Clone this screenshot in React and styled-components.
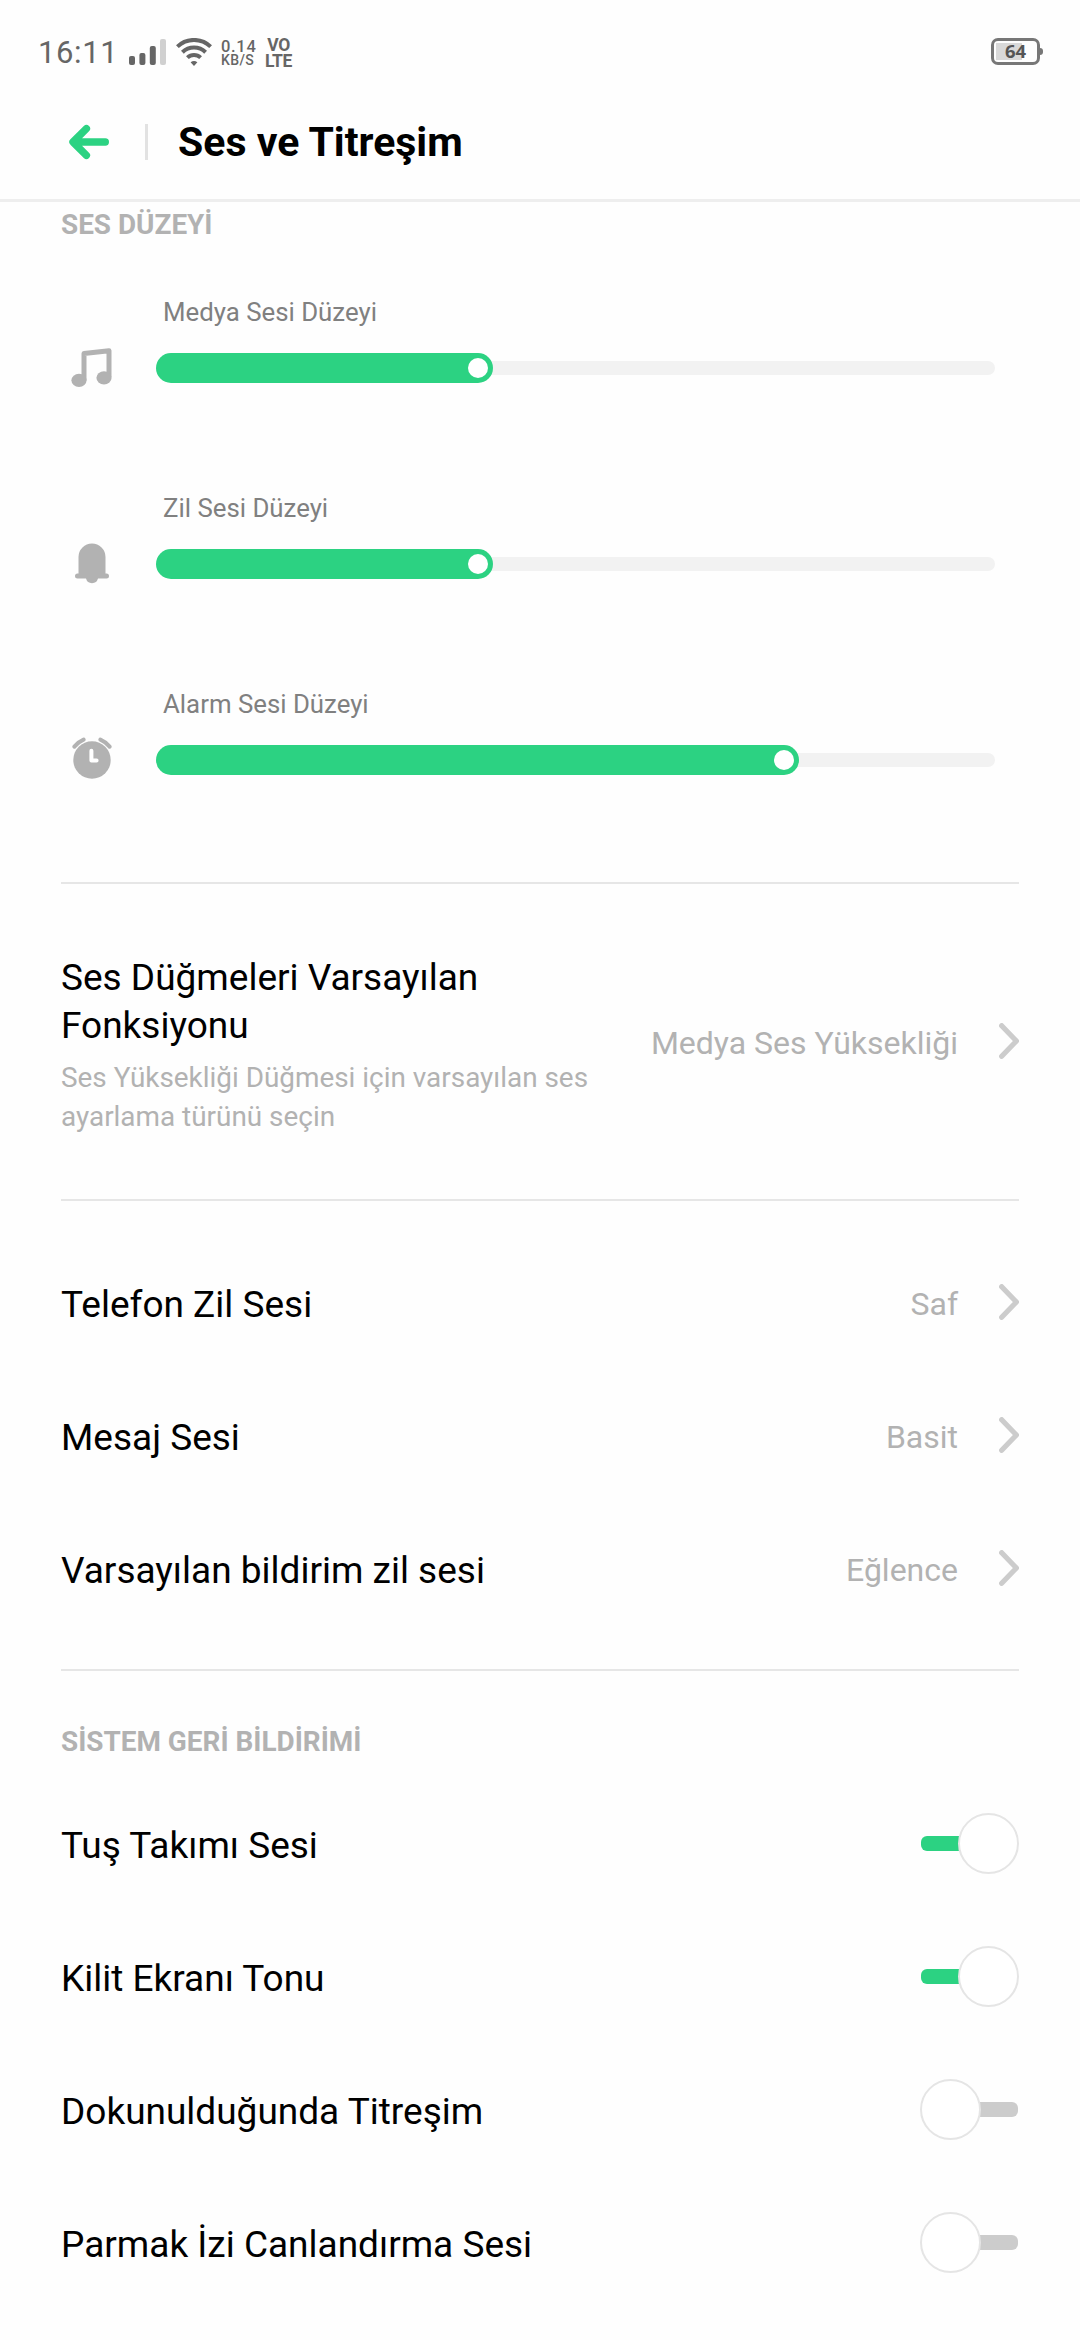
import styled, { createGlobalStyle, css } from "styled-components";

const GlobalStyle = createGlobalStyle`
  * {
    box-sizing: border-box;
  }

  body {
    margin: 0;
    background-color: #fefefe;
    font-family: Roboto, "Noto Sans", sans-serif;
    color: #000;
  }
`;

const Screen = styled.div`
  width: 1080px;
  height: 2340px;
  overflow: hidden;
  background-color: #fefefe;
`;

const StatusBar = styled.div`
  display: flex;
  justify-content: space-between;
  height: 84px;
  padding: 36px 37px 0 38px;
  color: #666;
`;

const StatusGroup = styled.div`
  display: flex;
  align-items: flex-start;
  height: 34px;
`;

const Clock = styled.div`
  width: 91px;
  font-size: 31px;
  line-height: 34px;
  letter-spacing: 0.6px;
`;

const SignalIcon = styled.svg`
  margin: 3px 10px 0 0;
`;

const WifiIcon = styled.svg`
  margin: 2px 9px 0 0;
`;

const NetSpeed = styled.div`
  width: 43px;
  font-weight: 500;
`;

const SpeedValue = styled.div`
  font-size: 16.5px;
  line-height: 17px;
  letter-spacing: 0.7px;
  margin-top: 2px;
`;

const SpeedUnit = styled.div`
  font-size: 14px;
  line-height: 11px;
  letter-spacing: 0.4px;
`;

const Volte = styled.div`
  width: 29px;
  padding-top: 1px;
  font-size: 17.5px;
  font-weight: 700;
  line-height: 16px;
  letter-spacing: -0.4px;
  text-align: center;
`;

const Battery = styled.div`
  display: flex;
  align-items: center;
  margin: 2px 0 0;
  height: 27px;
`;

const BatteryShell = styled.div`
  display: flex;
  align-items: center;
  justify-content: center;
  width: 49px;
  height: 27px;
  padding-bottom: 1px;
  border: 3px solid #777;
  border-radius: 7px;
  background: linear-gradient(#d9d9d9, #d9d9d9) 2px 2px / 26px 17px no-repeat;
  font-family: "Open Sans", "Noto Sans", sans-serif;
  font-size: 18.5px;
  font-weight: 700;
  line-height: 20px;
  color: #555;
`;

const BatteryTip = styled.div`
  width: 3px;
  height: 7px;
  border-radius: 0 3px 3px 0;
  background-color: #777;
`;

const Header = styled.div`
  display: flex;
  align-items: center;
  height: 118px;
  padding-left: 69px;
  border-bottom: 3px solid #eee;
`;

const HeaderRule = styled.div`
  width: 3px;
  height: 36px;
  margin: 0 30px 0 36px;
  background-color: #e2e2e2;
`;

const Title = styled.h1`
  margin: 0;
  font-size: 41px;
  font-weight: 700;
  line-height: 48px;
`;

const Content = styled.div`
  padding: 0 61px;
`;

const SectionTitle = styled.h2`
  margin: 0;
  padding-top: ${({ $space }) => $space}px;
  font-size: 27.9px;
  font-weight: 700;
  line-height: 32px;
  color: #b2b2b2;
`;

const Sliders = styled.div`
  display: flex;
  flex-direction: column;
  gap: 110px;
  padding: 56px 24px 107px 0;
`;

const SliderItem = styled.div`
  display: grid;
  grid-template-columns: 61px 1fr;
  column-gap: 34px;
  row-gap: 26px;
`;

const SliderLabel = styled.div`
  grid-column: 2;
  padding-left: 7px;
  font-size: 25.8px;
  line-height: 30px;
  color: #808080;
`;

const SliderIcon = styled.div`
  display: flex;
  align-items: center;
  justify-content: center;
  height: 30px;
`;

const SliderTrack = styled.div`
  display: flex;
  align-items: center;
  height: 30px;
`;

const SliderFill = styled.div`
  position: relative;
  z-index: 1;
  display: flex;
  align-items: center;
  justify-content: flex-end;
  height: 30px;
  padding-right: 5px;
  border-radius: 15px;
  background-color: #2cd282;
`;

const SliderRest = styled.div`
  flex: 1;
  height: 14px;
  margin-left: -15px;
  border-radius: 0 7px 7px 0;
  background-color: #f2f2f2;
`;

const SliderKnob = styled.div`
  width: 20px;
  height: 20px;
  border-radius: 50%;
  background-color: #fff;
`;

const Divider = styled.div`
  height: 2px;
  background-color: #e6e6e6;
`;

const List = styled.div`
  padding: ${({ $top, $bottom }) => `${$top}px 0 ${$bottom}px`};
`;

const Row = styled.div`
  display: flex;
  align-items: center;
  justify-content: space-between;
  height: 133px;

  ${({ $tall }) =>
    $tall &&
    css`
      height: 315px;
    `}
`;

const RowText = styled.div`
  width: 540px;
  padding-top: ${({ $offset }) => $offset || 4}px;
`;

const RowTitle = styled.div`
  font-size: 37px;
  line-height: 48px;
`;

const RowNote = styled.div`
  margin-top: 8px;
  font-size: 27.9px;
  line-height: 39px;
  color: #b2b2b2;
`;

const RowEnd = styled.div`
  display: flex;
  align-items: center;
  gap: 41px;
`;

const RowValue = styled.div`
  padding-top: 3px;
  font-size: 32px;
  line-height: 40px;
  color: #b2b2b2;
`;

const Switch = styled.div`
  position: relative;
  display: flex;
  align-items: center;
  width: 99px;
  height: 61px;
  padding: 0 1px;
`;

const SwitchTrack = styled.div`
  flex: 1;
  height: 15px;
  border-radius: 6px;
  background-color: ${({ $on }) => ($on ? "#2cd282" : "#ccc")};
`;

const SwitchThumb = styled.div`
  position: absolute;
  top: 0;
  ${({ $on }) => ($on ? "right: 0;" : "left: 0;")}
  width: 61px;
  height: 61px;
  border: 2px solid #e5e5e5;
  border-radius: 50%;
  background-color: #fff;
`;

const Signal = () => (
  <SignalIcon width="37" height="26" viewBox="0 0 37 26">
    <rect x="0" y="17" width="6" height="9" rx="2" fill="#666" />
    <rect x="10.4" y="14" width="6" height="12" rx="2" fill="#666" />
    <rect x="20.8" y="7" width="6" height="19" rx="2" fill="#666" />
    <rect x="31" y="0" width="6" height="26" rx="2" fill="#d0d0d0" />
  </SignalIcon>
);

const Wifi = () => (
  <WifiIcon width="36" height="28" viewBox="0 0 36 28">
    <g fill="none" stroke="#666" strokeWidth="4">
      <path d="M1.4 8.6A24 24 0 0 1 34.6 8.6" />
      <path d="M6.4 14.2A16.6 16.6 0 0 1 29.6 14.2" />
      <path d="M11.4 19.6A9.6 9.6 0 0 1 24.6 19.6" />
    </g>
    <path d="M14.6 24.2Q18 21.8 21.4 24.2L18 28Z" fill="#666" />
  </WifiIcon>
);

const BackArrow = () => (
  <svg width="40" height="36" viewBox="0 0 40 36">
    <path
      d="M17.4 4.7L4 18L17.4 31.3M5 18H36.3"
      fill="none"
      stroke="#2cd282"
      strokeWidth="7.4"
      strokeLinecap="round"
      strokeLinejoin="round"
    />
  </svg>
);

const Chevron = () => (
  <svg width="20" height="37" viewBox="0 0 20 37">
    <path
      d="M2.7 2.7L17.4 18L2.7 33.3"
      fill="none"
      stroke="#ccc"
      strokeWidth="5.2"
      strokeLinecap="round"
      strokeLinejoin="round"
    />
  </svg>
);

const MusicIcon = () => (
  <svg width="41" height="40" viewBox="0 0 41 40">
    <path
      d="M13 32V5.6L38 2.8V29"
      fill="none"
      stroke="#b2b2b2"
      strokeWidth="5"
      strokeLinejoin="round"
    />
    <ellipse cx="8" cy="32.3" rx="7.6" ry="6.6" fill="#b2b2b2" />
    <ellipse cx="33" cy="29.8" rx="7.6" ry="6.6" fill="#b2b2b2" />
  </svg>
);

const BellIcon = () => (
  <svg width="34" height="42" viewBox="0 0 34 42">
    <path
      d="M3.5 14A13.5 13.5 0 0 1 30.5 14V30.5H31.5A2.5 2.5 0 0 1 31.5 35.5H23A6.2 6.2 0 0 1 11 35.5H2.5A2.5 2.5 0 0 1 2.5 30.5H3.5Z"
      fill="#b2b2b2"
    />
  </svg>
);

const AlarmIcon = () => (
  <svg width="40" height="46" viewBox="0 0 40 46">
    <circle cx="20" cy="23" r="18.7" fill="#b2b2b2" />
    <g fill="none" strokeLinecap="round" strokeLinejoin="round">
      <path
        d="M2.4 9.6Q6.4 4.8 11.6 2.6M37.6 9.6Q33.6 4.8 28.4 2.6"
        stroke="#b2b2b2"
        strokeWidth="4"
      />
      <path d="M19.4 13.8V23.4H24.6" stroke="#fff" strokeWidth="4" />
    </g>
  </svg>
);

const volumes = [
  { label: "Medya Sesi Düzeyi", icon: <MusicIcon />, width: 336.5 },
  { label: "Zil Sesi Düzeyi", icon: <BellIcon />, width: 336.5 },
  { label: "Alarm Sesi Düzeyi", icon: <AlarmIcon />, width: 643 },
];

const ringtones = [
  { title: "Telefon Zil Sesi", value: "Saf" },
  { title: "Mesaj Sesi", value: "Basit" },
  { title: "Varsayılan bildirim zil sesi", value: "Eğlence" },
];

const feedback = [
  { title: "Tuş Takımı Sesi", on: true },
  { title: "Kilit Ekranı Tonu", on: true },
  { title: "Dokunulduğunda Titreşim", on: false },
  { title: "Parmak İzi Canlandırma Sesi", on: false },
];

export default function App() {
  return (
    <>
      <GlobalStyle />
      <Screen>
        <StatusBar>
          <StatusGroup>
            <Clock>16:11</Clock>
            <Signal />
            <Wifi />
            <NetSpeed>
              <SpeedValue>0.14</SpeedValue>
              <SpeedUnit>KB/S</SpeedUnit>
            </NetSpeed>
            <Volte>
              VO
              <br />
              LTE
            </Volte>
          </StatusGroup>
          <Battery>
            <BatteryShell>64</BatteryShell>
            <BatteryTip />
          </Battery>
        </StatusBar>
        <Header>
          <BackArrow />
          <HeaderRule />
          <Title>Ses ve Titreşim</Title>
        </Header>
        <Content>
          <SectionTitle $space={7}>SES DÜZEYİ</SectionTitle>
          <Sliders>
            {volumes.map(({ label, icon, width }) => (
              <SliderItem key={label}>
                <SliderLabel>{label}</SliderLabel>
                <SliderIcon>{icon}</SliderIcon>
                <SliderTrack>
                  <SliderFill style={{ width }}>
                    <SliderKnob />
                  </SliderFill>
                  <SliderRest />
                </SliderTrack>
              </SliderItem>
            ))}
          </Sliders>
          <Divider />
          <Row $tall>
            <RowText $offset={7}>
              <RowTitle>Ses Düğmeleri Varsayılan Fonksiyonu</RowTitle>
              <RowNote>
                Ses Yüksekliği Düğmesi için varsayılan ses ayarlama türünü seçin
              </RowNote>
            </RowText>
            <RowEnd>
              <RowValue>Medya Ses Yüksekliği</RowValue>
              <Chevron />
            </RowEnd>
          </Row>
          <Divider />
          <List $top={35} $bottom={34}>
            {ringtones.map(({ title, value }) => (
              <Row key={title}>
                <RowText>
                  <RowTitle>{title}</RowTitle>
                </RowText>
                <RowEnd>
                  <RowValue>{value}</RowValue>
                  <Chevron />
                </RowEnd>
              </Row>
            ))}
          </List>
          <Divider />
          <SectionTitle $space={55}>SİSTEM GERİ BİLDİRİMİ</SectionTitle>
          <List $top={19} $bottom={0}>
            {feedback.map(({ title, on }) => (
              <Row key={title}>
                <RowText>
                  <RowTitle>{title}</RowTitle>
                </RowText>
                <Switch>
                  <SwitchTrack $on={on} />
                  <SwitchThumb $on={on} />
                </Switch>
              </Row>
            ))}
          </List>
        </Content>
      </Screen>
    </>
  );
}
